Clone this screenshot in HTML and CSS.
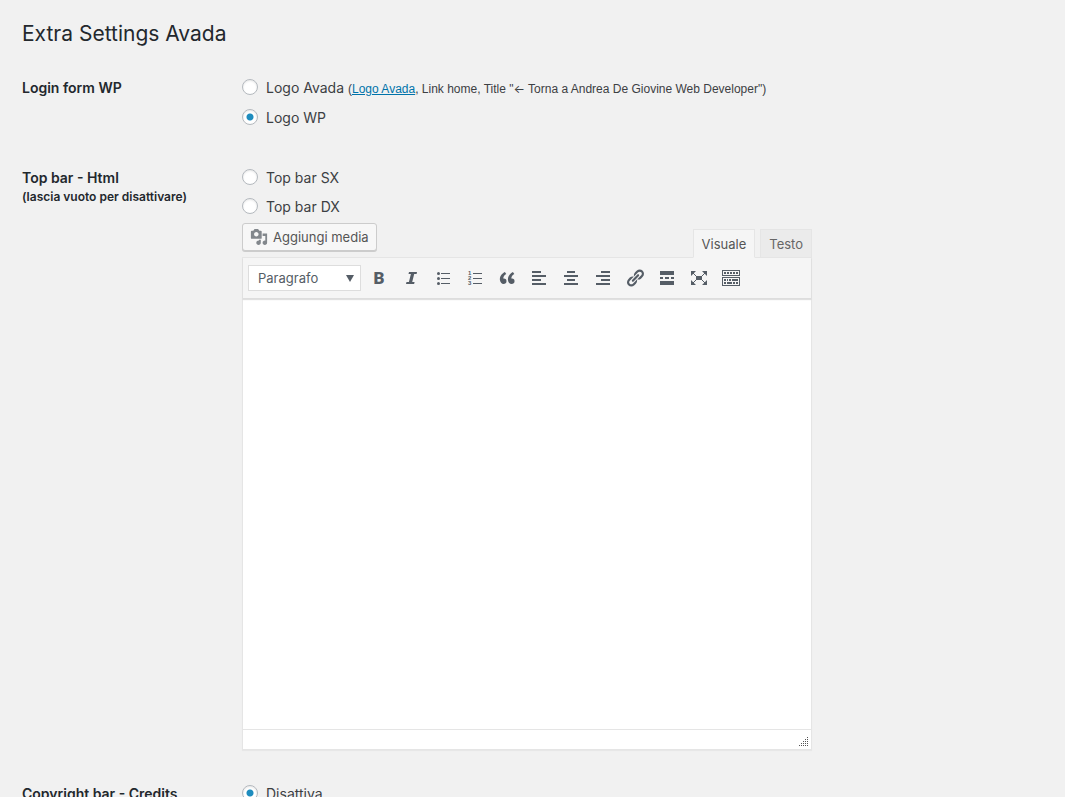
FILE: index.html
```html
<!DOCTYPE html>
<html lang="it">
<head>
<meta charset="utf-8">
<meta name="viewport" content="width=device-width, initial-scale=1">
<title>Extra Settings Avada</title>
<link rel="stylesheet" href="styles.css">
</head>
<body>
<main class="wrap">
  <h1 class="title">Extra Settings Avada</h1>
  <form class="settings">
    <section class="row row-spaced">
      <h2 class="row-title">Login form WP</h2>
      <div class="options">
        <label class="option option-first"><input class="radio" type="radio" name="login"><span>Logo Avada <small class="note">(<a class="link" href="#">Logo Avada</a>, Link home, Title "<span class="arrow">←</span> Torna a Andrea De Giovine Web Developer")</small></span></label>
        <label class="option"><input class="radio" type="radio" name="login" checked><span>Logo WP</span></label>
      </div>
    </section>
    <section class="row">
      <h2 class="row-title">Top bar - Html <small class="row-note">(lascia vuoto per disattivare)</small></h2>
      <div class="options">
        <label class="option"><input class="radio" type="radio" name="topbar"><span>Top bar SX</span></label>
        <label class="option"><input class="radio" type="radio" name="topbar"><span>Top bar DX</span></label>
        <div class="editor">
          <div class="editor-tools">
            <button class="media-button" type="button">
              <svg class="media-icon" viewBox="0 0 20 20" aria-hidden="true"><path d="M13 11V4c0-.55-.45-1-1-1h-1.67L9 1H5L3.67 3H2c-.55 0-1 .45-1 1v7c0 .55.45 1 1 1h10c.55 0 1-.45 1-1zM7 4.5c1.38 0 2.5 1.12 2.5 2.5S8.380 9.5 7 9.5 4.500 8.380 4.500 7 5.620 4.500 7 4.500zM14 6h5v10.500c0 1.380-1.120 2.500-2.500 2.500S14 17.880 14 16.500s1.120-2.500 2.500-2.500c.17 0 .34.02.5.05V9h-3V6zm-4 8.050V13h2v3.500c0 1.380-1.120 2.500-2.500 2.500S7 17.880 7 16.500 8.120 14 9.500 14c.17 0 .34.02.5.05z"/></svg>
              Aggiungi media
            </button>
            <div class="tabs">
              <button class="tab tab-active" type="button">Visuale</button>
              <button class="tab" type="button">Testo</button>
            </div>
          </div>
          <div class="panel">
            <div class="toolbar">
              <div class="format">
                <select class="format-select" aria-label="Formato"><option>Paragrafo</option></select>
                <svg class="format-arrow" viewBox="0 0 8 7" aria-hidden="true"><path d="M0 0h8L4 7z"/></svg>
              </div>
              <button class="tool tool-bold" type="button" aria-label="Grassetto">B</button>
              <button class="tool" type="button" aria-label="Corsivo"><svg class="icon" viewBox="0 0 20 20"><path d="M8 4h8l-.4 2h-2.400l-2 8h2.400l-.5 2H5l.5-2h2.400l2-8H7.500z"/></svg></button>
              <button class="tool" type="button" aria-label="Elenco puntato"><svg class="icon" viewBox="0 0 20 20"><circle cx="5.500" cy="5.500" r="1.500"/><circle cx="5.500" cy="10.500" r="1.500"/><circle cx="5.500" cy="15.500" r="1.500"/><path d="M8 5h9v1H8zM8 10h9v1H8zM8 15h9v1H8z"/></svg></button>
              <button class="tool" type="button" aria-label="Elenco numerato"><svg class="icon" viewBox="0 0 20 20"><text class="digit" x="3" y="7">1</text><text class="digit" x="3" y="12">2</text><text class="digit" x="3" y="17">3</text><path d="M8 5h9v1H8zM8 10h9v1H8zM8 15h9v1H8z"/></svg></button>
              <button class="tool" type="button" aria-label="Citazione"><svg class="icon" viewBox="0 0 20 20"><path d="M9.490 13.220c0-.74-.2-1.380-.61-1.900-.62-.78-1.830-.88-2.530-.72-.29-1.650 1.110-3.750 2.920-4.650L7.880 4c-2.730 1.300-5.420 4.280-4.960 8.050C3.210 14.430 4.590 16 6.540 16c.85 0 1.560-.25 2.120-.75s.83-1.180.83-2.030zm8.050 0c0-.74-.2-1.380-.61-1.900-.63-.78-1.830-.88-2.530-.72-.29-1.650 1.110-3.750 2.920-4.650L15.930 4c-2.730 1.300-5.410 4.280-4.950 8.050.29 2.380 1.660 3.950 3.610 3.950.85 0 1.560-.25 2.120-.75s.83-1.180.83-2.030z"/></svg></button>
              <button class="tool" type="button" aria-label="Allinea a sinistra"><svg class="icon" viewBox="0 0 20 20"><path d="M3 3h9v2H3zM3 7h14v2H3zM3 11h9v2H3zM3 15h14v2H3z"/></svg></button>
              <button class="tool" type="button" aria-label="Allinea al centro"><svg class="icon" viewBox="0 0 20 20"><path d="M6 3h8v2H6zM3 7h14v2H3zM6 11h8v2H6zM3 15h14v2H3z"/></svg></button>
              <button class="tool" type="button" aria-label="Allinea a destra"><svg class="icon" viewBox="0 0 20 20"><path d="M8 3h9v2H8zM3 7h14v2H3zM8 11h9v2H8zM3 15h14v2H3z"/></svg></button>
              <button class="tool" type="button" aria-label="Inserisci link"><svg class="icon" viewBox="0 0 20 20"><path d="M17.740 2.760c1.680 1.690 1.680 4.410 0 6.100l-1.530 1.520c-1.120 1.120-2.700 1.470-4.140 1.090l2.620-2.610.76-.77.76-.76c.84-.84.84-2.200 0-3.040-.84-.85-2.200-.85-3.040 0l-.77.76-3.380 3.380c-.37-1.440-.02-3.020 1.100-4.140l1.520-1.530c1.690-1.680 4.420-1.680 6.100 0zM8.590 13.430l5.340-5.340c.42-.42.42-1.100 0-1.520-.44-.43-1.130-.39-1.530 0l-5.330 5.340c-.42.42-.42 1.100 0 1.520.44.43 1.130.39 1.520 0zm-.76 2.290l4.140-4.150c.38 1.440.03 3.020-1.090 4.140l-1.520 1.530c-1.690 1.680-4.410 1.680-6.100 0-1.680-1.680-1.680-4.420 0-6.100l1.530-1.520c1.120-1.120 2.700-1.470 4.140-1.100l-4.140 4.150c-.85.84-.85 2.200 0 3.050.84.84 2.200.84 3.040 0z"/></svg></button>
              <button class="tool" type="button" aria-label="Leggi tutto"><svg class="icon" viewBox="0 0 20 20"><path d="M3 3h14v4H3zM3 9h3v2H3zM8 9h4v2H8zM14 9h3v2h-3zM3 13h14v4H3z"/></svg></button>
              <button class="tool" type="button" aria-label="Schermo intero"><svg class="icon" viewBox="0 0 20 20"><path d="M7 8h6v4H7zM2 3h5L2 8zM18 3v5l-5-5zM2 17v-5l5 5zM18 17h-5l5-5z"/><path class="stroke" d="M3 4l5 5M17 4l-5 5M3 16l5-5M17 16l-5-5"/></svg></button>
              <button class="tool" type="button" aria-label="Barra strumenti"><svg class="icon" viewBox="0 0 20 20"><path fill-rule="evenodd" d="M1 2h18v6H1zM2 3v4h16V3zM1 9h18v9H1zM2 10v7h16v-7z"/><path d="M3 4h2v2H3zM6 4h2v2H6zM9 4h2v2H9zM12 4h2v2h-2zM15 4h2v2h-2zM3 11h2v2H3zM6 11h1v2H6zM8 11h2v2H8zM11 11h1v2h-1zM12 11h5v2h-5zM3 14h2v2H3zM6 14h5v2H6zM12 14h2v2h-2zM15 14h2v2h-2z"/></svg></button>
            </div>
            <textarea class="content" aria-label="Contenuto"></textarea>
            <div class="status"><svg class="grip" viewBox="0 0 10 10" aria-hidden="true"><path d="M8 0h1v1H8zM6 2h1v1H6zM8 2h1v1H8zM4 4h1v1H4zM6 4h1v1H6zM8 4h1v1H8zM2 6h1v1H2zM4 6h1v1H4zM6 6h1v1H6zM8 6h1v1H8zM0 8h1v1H0zM2 8h1v1H2zM4 8h1v1H4zM6 8h1v1H6zM8 8h1v1H8z"/></svg></div>
          </div>
        </div>
      </div>
    </section>
    <section class="row">
      <h2 class="row-title">Copyright bar - Credits</h2>
      <div class="options">
        <label class="option"><input class="radio" type="radio" name="credits" checked><span>Disattiva</span></label>
      </div>
    </section>
  </form>
</main>
</body>
</html>
```
FILE: styles.css
```css
* { box-sizing: border-box; }
body {
  margin: 0;
  height: 100vh;
  overflow: hidden;
  background: #f1f1f1;
  color: #3c4043;
  font: 14px/20px Inter, Roboto, sans-serif;
}
.wrap { padding: 20px 22px; }
.title {
  margin: 0 0 30px;
  color: #23282d;
  font-size: 21px;
  font-weight: 400;
  line-height: 28px;
}
.settings { display: flex; flex-direction: column; gap: 34px; }
.row { display: grid; grid-template-columns: 220px minmax(0, 1fr); }
.row-spaced { padding-bottom: 6px; }
.row-title {
  margin: 0;
  color: #23282d;
  font-size: 14px;
  font-weight: 600;
  line-height: 20px;
}
.row-note { display: block; font-size: 12px; line-height: 18px; }
.options { display: flex; flex-direction: column; align-items: flex-start; gap: 9px; }
.option { display: flex; align-items: flex-start; gap: 8px; }
.option-first { margin-bottom: 1px; }
.note { font: 12px/18px "Liberation Sans", sans-serif; }
.arrow { font-family: Inter, sans-serif; }
.link { color: #0073aa; text-decoration: underline; }
.radio {
  appearance: none;
  flex: none;
  width: 16px;
  height: 16px;
  margin: 1px 0 0;
  border: 1px solid #b4b9be;
  border-radius: 50%;
  background: #fff;
  box-shadow: inset 0 1px 2px rgba(0, 0, 0, 0.1);
}
.radio:checked { background: radial-gradient(circle, #1e8cbe 3px, #fff 4px); }
.editor { width: 100%; max-width: 570px; margin-top: -3px; }
.editor-tools { display: flex; align-items: flex-end; justify-content: space-between; height: 34px; }
.media-button {
  display: flex;
  align-items: center;
  align-self: flex-start;
  gap: 5px;
  height: 28px;
  padding: 0 7px;
  border: 1px solid #ccc;
  border-radius: 3px;
  background: #f7f7f7;
  box-shadow: 0 1px 0 #ccc;
  color: #555;
  font: 13px/18px Inter, Roboto, sans-serif;
}
.media-icon { width: 18px; height: 18px; fill: #82878c; }
.tabs { display: flex; gap: 5px; margin-bottom: -1px; position: relative; }
.tab {
  height: 29px;
  padding: 0 8px;
  border: 1px solid #e5e5e5;
  background: #ebebeb;
  color: #666;
  font: 13px/18px Inter, Roboto, sans-serif;
}
.tab-active { border-bottom-color: #f5f5f5; background: #f5f5f5; color: #555; }
.panel { border: 1px solid #e5e5e5; box-shadow: 0 1px 1px rgba(0, 0, 0, 0.04); }
.toolbar {
  position: relative;
  display: flex;
  align-items: center;
  gap: 4px;
  height: 41px;
  padding: 0 5px;
  border-bottom: 1px solid #ddd;
  background: #f5f5f5;
  box-shadow: 0 1px 1px rgba(0, 0, 0, 0.12);
}
.format { position: relative; width: 113px; }
.format-select {
  appearance: none;
  display: block;
  width: 100%;
  height: 26px;
  padding: 0 9px;
  border: 1px solid #ddd;
  border-radius: 0;
  background: #fff;
  color: #555d66;
  font: 13px/18px Inter, Roboto, sans-serif;
}
.format-arrow {
  position: absolute;
  top: 10px;
  right: 7px;
  width: 8px;
  height: 7px;
  fill: #555d66;
  pointer-events: none;
}
.tool {
  display: grid;
  place-items: center;
  width: 28px;
  height: 28px;
  padding: 0;
  border: 0;
  background: none;
  color: #555d66;
}
.tool-bold { font: 900 17px/20px Roboto, sans-serif; }
.icon { width: 20px; height: 20px; fill: currentColor; }
.digit { font: bold 6px "Liberation Sans", sans-serif; }
.stroke { fill: none; stroke: currentColor; stroke-width: 1; }
.content {
  display: block;
  width: 100%;
  height: 430px;
  padding: 10px;
  border: 0;
  background: #fff;
  resize: none;
}
.status {
  display: flex;
  align-items: flex-end;
  justify-content: flex-end;
  height: 20px;
  padding: 2px;
  border-top: 1px solid #e5e5e5;
  background: #fff;
}
.grip { width: 10px; height: 10px; fill: #555; }
```
